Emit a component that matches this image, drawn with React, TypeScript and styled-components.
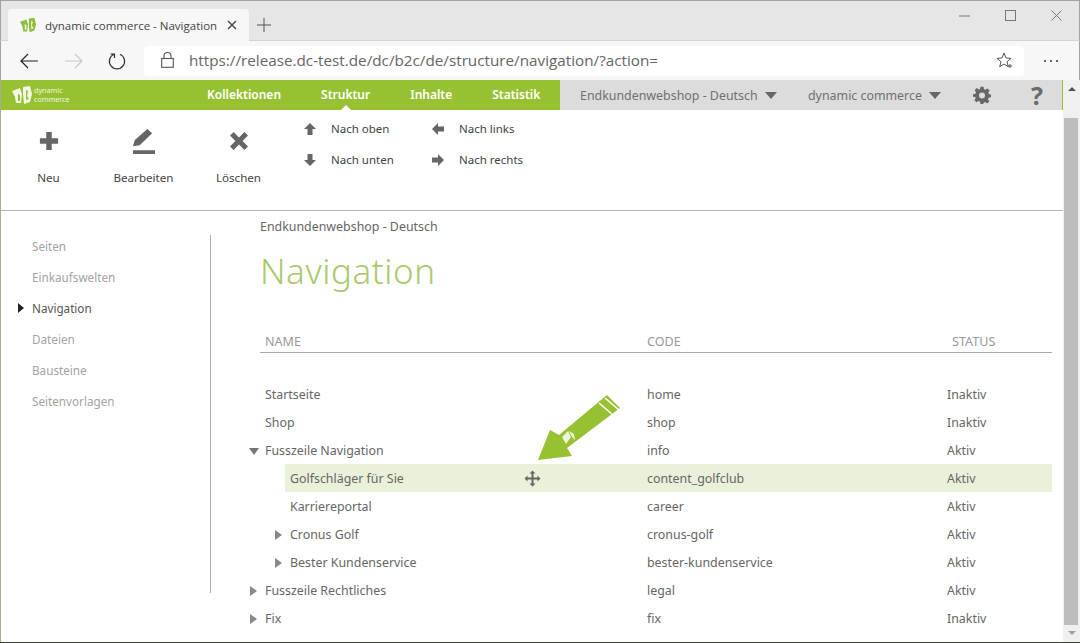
import React from "react";
import styled, { createGlobalStyle } from "styled-components";

const Global = createGlobalStyle`
  html, body { margin: 0; padding: 0; height: 100%; overflow: hidden; background: #fff; }
  #root { height: 643px; }
  * { box-sizing: border-box; }
`;

const Window = styled.div`
  width: 1080px; height: 643px; display: flex; flex-direction: column;
  font-family: "Noto Sans", "Open Sans", sans-serif; color: #666; overflow: hidden;
  border-bottom: 1px solid #3a3f36;
`;
const TabStrip = styled.div`
  height: 41px; flex: none; background: #e6e6e6; border-top: 1px solid #a3a3a3; border-left: 1px solid #a3a3a3; border-right: 1px solid #a3a3a3;
  border-bottom: 1px solid #d4d4d4; display: flex; padding: 8px 0 0 7px; align-items: flex-start;
`;
const Tab = styled.div`
  width: 241px; height: 32px; background: #f7f7f7; border-radius: 4px 4px 0 0; display: flex; align-items: center;
  padding: 0 12px 0 12px; font-family: "Open Sans", sans-serif; font-size: 11.5px; color: #444;
`;
const TabTitle = styled.span` margin-left: 9px; flex: 1; white-space: nowrap; `;
const NewTab = styled.div` margin: 9px 0 0 8px; width: 20px; height: 20px; display: flex; `;
const WindowControls = styled.div` margin-left: auto; display: flex; height: 12px; padding-right: 17px; gap: 35px; align-items: center; `;
const Toolbar = styled.div`
  height: 39px; flex: none; background: #f7f7f7; display: flex; align-items: center; border-left: 1px solid #a3a3a3; border-right: 1px solid #a3a3a3;
`;
const NavIcons = styled.div` display: flex; width: 143px; padding-left: 18px; gap: 24.5px; align-items: center; `;
const Address = styled.div`
  width: 880px; height: 30px; background: #fff; border-radius: 4px; display: flex; align-items: center; padding: 0 11px 1px 17px;
  font-family: "Open Sans", sans-serif; font-size: 15.25px; color: #666; white-space: nowrap;
`;
const Url = styled.span` margin-left: 15px; flex: 1; `;
const More = styled.div` margin-left: 19px; display: flex; align-items: center; `;
const Page = styled.div` flex: 1; display: flex; min-height: 0; border-left: 1px solid #a5b08d; `;
const Content = styled.div` flex: 1; display: flex; flex-direction: column; min-width: 0; position: relative; `;
const TopNav = styled.div`
  height: 30px; flex: none; display: flex; background: #97c133; position: relative;
`;
const Brand = styled.div`
  width: 206px; flex: none; display: flex; align-items: center; padding-left: 11px; gap: 2px; color: #fff;
`;
const BrandText = styled.div` font-size: 7.2px; line-height: 9px; color: #eef6da; font-weight: 400; `;
const Menu = styled.div` width: 353px; flex: none; display: flex; gap: 40px; `;
const MenuItem = styled.div<{ $active?: boolean }>`
  position: relative; color: #fff; font-weight: 600; font-size: 12px; line-height: 30px; white-space: nowrap;
  ${(p) => p.$active && `&::after { content: ""; position: absolute; left: 50%; bottom: 0; margin-left: -5px; border: 5px solid transparent; border-top: 0; border-bottom-color: #fff; }`}
`;
const Account = styled.div`
  flex: 1; background: #dcdcdc; display: flex; align-items: center; color: #6f6f6f; font-size: 12.4px; white-space: nowrap; padding-left: 20px;
  border-right: 1px solid #97c133;
`;
const AccountItem = styled.div<{ $w: number }>` width: ${(p) => p.$w}px; flex: none; display: flex; align-items: center; gap: 7px; `;
const Caret = styled.span`
  width: 0; height: 0; border-left: 6.5px solid transparent; border-right: 6.5px solid transparent; border-top: 7px solid #666; flex: none;
`;
const Help = styled.div` font-size: 25px; font-weight: 700; color: #6a6a6a; margin-left: 40px; line-height: 1; `;
const Actions = styled.div`
  height: 101px; flex: none; display: flex; border-bottom: 1px solid #b3b8ad; margin-left: 0;
`;
const BigAction = styled.div<{ $w: number }>`
  width: ${(p) => p.$w}px; flex: none; display: flex; flex-direction: column; align-items: center; padding-top: 15px;
  font-size: 11.6px; color: #444;
`;
const BigIcon = styled.div` height: 32px; display: flex; align-items: center; justify-content: center; margin-bottom: 13px; `;
const BigLabel = styled.div` line-height: 16px; `;
const BigGroup = styled.div` display: flex; width: 286px; `;
const SmallGrid = styled.div`
  display: grid; grid-template-columns: 128px 120px; grid-auto-rows: 31px; padding: 3px 0 0 16px; font-size: 11.5px; color: #444;
`;
const SmallAction = styled.div` display: flex; align-items: center; gap: 14px; height: 31px; `;
const Body = styled.div` flex: 1; display: flex; min-height: 0; position: relative; `;
const Side = styled.div`
  width: 210px; flex: none; margin-top: 24px; height: 358px; border-right: 1px solid #aeaeae; display: flex; flex-direction: column;
  padding-left: 31px; font-size: 11.7px;
`;
const SideItem = styled.div<{ $active?: boolean }>`
  height: 31px; line-height: 23px; color: ${(p) => (p.$active ? "#555" : "#a3a3a3")}; position: relative;
  ${(p) => p.$active && `&::before { content: ""; position: absolute; left: -14px; top: 6px; border: 5px solid transparent; border-left: 6px solid #222; border-right: 0; }`}
`;
const Main = styled.div` flex: 1; padding: 8px 11px 0 49px; min-width: 0; `;
const Crumb = styled.div` font-size: 12.4px; line-height: 16px; color: #666; `;
const Title = styled.h1`
  margin: 12px 0 0; font-family: "Noto Sans", sans-serif; font-weight: 300; font-size: 35px; line-height: 48px; color: #a9ca6c; letter-spacing: .55px;
`;
const HeadRow = styled.div`
  margin-top: 33px; height: 25px; padding-top: 5px; display: grid; grid-template-columns: 382px 305px 1fr; padding-left: 5px;
  border-bottom: 1px solid #aaa; font-size: 12.6px; color: #999; line-height: 17px;
`;
const Rows = styled.div` margin-top: 27px; display: flex; flex-direction: column; `;
const Row = styled.div<{ $depth: number; $selected?: boolean }>`
  height: 28px; display: grid; grid-template-columns: ${(p) => 382 - p.$depth * 25}px 300px 1fr; align-items: center; font-size: 12.4px; color: #666;
  margin-left: ${(p) => p.$depth * 25}px; padding-left: 5px; white-space: nowrap;
  background: ${(p) => (p.$selected ? "#e9f1da" : "transparent")};
`;
const NameCell = styled.div` position: relative; display: flex; justify-content: space-between; `;
const Tri = styled.span<{ $open?: boolean }>`
  position: absolute; top: ${(p) => (p.$open ? 6 : 4)}px; width: 0; height: 0;
  ${(p) => p.$open
    ? `left: -16px; border-left: 5px solid transparent; border-right: 5px solid transparent; border-top: 7px solid #777;`
    : `left: -15px; border-top: 5px solid transparent; border-bottom: 5px solid transparent; border-left: 7px solid #888;`}
`;
const MoveWrap = styled.span` margin-right: 106px; display: flex; align-items: center; `;
const Scroll = styled.div`
  width: 17px; flex: none; background: #f0f0f0; display: flex; flex-direction: column; align-items: center; justify-content: space-between; padding: 7px 0 7px; position: relative;
`;
const Thumb = styled.div` position: absolute; left: 1px; right: 2px; top: 38px; bottom: 17px; background: #bdbdbd; `;
const ScrollArrow = styled.span<{ $down?: boolean }>`
  width: 0; height: 0; border-left: 4px solid transparent; border-right: 4px solid transparent;
  ${(p) => (p.$down ? "border-top: 4px solid #a0a0a0;" : "border-bottom: 4px solid #505050;")}
`;
const Pointer = styled.svg` position: absolute; left: 537px; top: 315px; `;

const Logo = ({ size, color, inner }: { size: number; color: string; inner: string }) => (
  <svg width={size} height={size} viewBox="0 0 20 20">
    <path d="M0 6 L8 3 L10 9 L9 18 L4 18 L3 12 Z" fill={color} />
    <path d="M11 2 L18 1 L20 9 L18 17 L12 19 L11 10 Z" fill={color} />
    <path d="M6 9l2 1v6H6zM14 5l2 1-1 5 2 3-3 1z" fill={inner} />
  </svg>
);

const Gray = "#666";
const rows = [
  { d: 0, n: "Startseite", c: "home", s: "Inaktiv" },
  { d: 0, n: "Shop", c: "shop", s: "Inaktiv" },
  { d: 0, n: "Fusszeile Navigation", c: "info", s: "Aktiv", t: "open" },
  { d: 1, n: "Golfschläger für Sie", c: "content_golfclub", s: "Aktiv", sel: true },
  { d: 1, n: "Karriereportal", c: "career", s: "Aktiv" },
  { d: 1, n: "Cronus Golf", c: "cronus-golf", s: "Aktiv", t: "closed" },
  { d: 1, n: "Bester Kundenservice", c: "bester-kundenservice", s: "Aktiv", t: "closed" },
  { d: 0, n: "Fusszeile Rechtliches", c: "legal", s: "Aktiv", t: "closed" },
  { d: 0, n: "Fix", c: "fix", s: "Inaktiv", t: "closed" },
];

const Arrow = ({ r }: { r: number }) => (
  <svg width="14" height="14" viewBox="0 0 14 14" style={{ transform: `rotate(${r}deg)` }}>
    <path d="M7 1 L13 7 L9.5 7 L9.5 13 L4.5 13 L4.5 7 L1 7 Z" fill={Gray} />
  </svg>
);

export default function App() {
  return (
    <Window>
      <Global />
      <TabStrip>
        <Tab>
          <Logo size={16} color="#8fbf3a" inner="#f7f7f7" />
          <TabTitle>dynamic commerce - Navigation</TabTitle>
          <svg width="10" height="10" viewBox="0 0 10 10"><path d="M1 1l8 8M9 1l-8 8" stroke="#444" strokeWidth="1.4" /></svg>
        </Tab>
        <NewTab>
          <svg width="14" height="14" viewBox="0 0 14 14"><path d="M7 0v14M0 7h14" stroke="#555" strokeWidth="1" /></svg>
        </NewTab>
        <WindowControls>
          <svg width="11" height="11" viewBox="0 0 11 11"><path d="M0 6h11" stroke="#777" /></svg>
          <svg width="11" height="11" viewBox="0 0 11 11"><rect x=".5" y=".5" width="10" height="10" fill="none" stroke="#777" /></svg>
          <svg width="11" height="11" viewBox="0 0 11 11"><path d="M.5.5l10 10M10.500.5l-10 10" stroke="#777" /></svg>
        </WindowControls>
      </TabStrip>
      <Toolbar>
        <NavIcons>
          <svg width="20" height="18" viewBox="0 0 20 18"><path d="M19 9H2M9 2L2 9l7 7" fill="none" stroke="#222" strokeWidth="1.2" /></svg>
          <svg width="20" height="18" viewBox="0 0 20 18"><path d="M1 9h17M11 2l7 7-7 7" fill="none" stroke="#c8c8c8" strokeWidth="1.2" /></svg>
          <svg width="18" height="18" viewBox="0 0 18 18"><path d="M6 2.2A7.6 7.6 0 1 0 12 2.2M6.5 6V2H2.500" fill="none" stroke="#333" strokeWidth="1.2" /></svg>
        </NavIcons>
        <Address>
          <svg width="13" height="16" viewBox="0 0 13 16"><rect x=".7" y="6.5" width="11.6" height="8.8" fill="none" stroke="#555" strokeWidth="1.1" /><path d="M3 6.5V4a3.5 3.5 0 0 1 7 0v2.500" fill="none" stroke="#555" strokeWidth="1.1" /></svg>
          <Url>https://release.dc-test.de/dc/b2c/de/structure/navigation/?action=</Url>
          <svg width="17" height="17" viewBox="0 0 17 17"><path d="M8 1l2 5 5 .4-4 3.300 1.300 5L8 12l-4.300 2.700 1.300-5-4-3.300L6 6z" fill="none" stroke="#555" strokeWidth="1" /><path d="M14 12v4M12 14h4" stroke="#555" strokeWidth="1" /></svg>
        </Address>
        <More>
          <svg width="16" height="4" viewBox="0 0 16 4"><circle cx="2" cy="2" r="1" fill="#333" /><circle cx="8" cy="2" r="1" fill="#333" /><circle cx="14" cy="2" r="1" fill="#333" /></svg>
        </More>
      </Toolbar>
      <Page>
        <Content>
          <TopNav>
            <Brand>
              <Logo size={20} color="#f2f7e6" inner="#97c133" />
              <BrandText>dynamic<br />commerce</BrandText>
            </Brand>
            <Menu>
              <MenuItem>Kollektionen</MenuItem>
              <MenuItem $active>Struktur</MenuItem>
              <MenuItem>Inhalte</MenuItem>
              <MenuItem>Statistik</MenuItem>
            </Menu>
            <Account>
              <AccountItem $w={228}>Endkundenwebshop - Deutsch <Caret /></AccountItem>
              <AccountItem $w={165}>dynamic commerce <Caret /></AccountItem>
              <svg width="18" height="18" viewBox="0 0 24 24"><path fillRule="evenodd" fill="#666" d="M10 1h4l.7 3.200 1.900.8L19.400 3.200l2.800 2.800-1.800 2.800.8 1.900L24 11.500v3.500l-3.200.7-.8 1.900 1.800 2.800-2.800 2.800-2.800-1.800-1.900.8L13.500 24H10l-.7-3.200-1.900-.8-2.800 1.800-2.800-2.800 1.800-2.800-.8-1.900L0 14.500V11l3.200-.7.8-1.900L2.200 5.600 5 2.800l2.800 1.800 1.500-.6zM12 8.500a4 4 0 1 0 0 8 4 4 0 0 0 0-8z" /></svg>
              <Help>?</Help>
            </Account>
          </TopNav>
          <Actions>
            <BigGroup>
              <BigAction $w={95}>
                <BigIcon><svg width="20" height="20" viewBox="0 0 22 22"><path d="M8 1h6v7h7v6h-7v7H8v-7H1V8h7z" fill={Gray} /></svg></BigIcon>
                <BigLabel>Neu</BigLabel>
              </BigAction>
              <BigAction $w={95}>
                <BigIcon><svg width="23" height="27" viewBox="0 0 24 28"><path d="M16 1l5 4.500L8 18l-7 1 2-6.500zM1 23h23v4H1z" fill={Gray} /></svg></BigIcon>
                <BigLabel>Bearbeiten</BigLabel>
              </BigAction>
              <BigAction $w={95}>
                <BigIcon><svg width="18" height="18" viewBox="0 0 20 20"><path d="M4 0l6 6 6-6 4 4-6 6 6 6-4 4-6-6-6 6-4-4 6-6-6-6z" fill={Gray} /></svg></BigIcon>
                <BigLabel>Löschen</BigLabel>
              </BigAction>
            </BigGroup>
            <SmallGrid>
              <SmallAction><Arrow r={0} />Nach oben</SmallAction>
              <SmallAction><Arrow r={-90} />Nach links</SmallAction>
              <SmallAction><Arrow r={180} />Nach unten</SmallAction>
              <SmallAction><Arrow r={90} />Nach rechts</SmallAction>
            </SmallGrid>
          </Actions>
          <Body>
            <Side>
              <SideItem>Seiten</SideItem>
              <SideItem>Einkaufswelten</SideItem>
              <SideItem $active>Navigation</SideItem>
              <SideItem>Dateien</SideItem>
              <SideItem>Bausteine</SideItem>
              <SideItem>Seitenvorlagen</SideItem>
            </Side>
            <Main>
              <Crumb>Endkundenwebshop - Deutsch</Crumb>
              <Title>Navigation</Title>
              <HeadRow><span>NAME</span><span>CODE</span><span>STATUS</span></HeadRow>
              <Rows>
                {rows.map((r) => (
                  <Row key={r.n} $depth={r.d} $selected={r.sel}>
                    <NameCell>
                      {r.t && <Tri $open={r.t === "open"} />}
                      <span>{r.n}</span>
                      {r.sel && (
                        <MoveWrap>
                          <svg width="17" height="17" viewBox="0 0 17 17"><path d="M8.500 .5l3 3h-2v4h4v-2l3 3-3 3v-2h-4v4h2l-3 3-3-3h2v-4h-4v2l-3-3 3-3v2h4v-4h-2z" fill="#666" /></svg>
                        </MoveWrap>
                      )}
                    </NameCell>
                    <span>{r.c}</span>
                    <span>{r.s}</span>
                  </Row>
                ))}
              </Rows>
            </Main>
          </Body>
          <Pointer width="90" height="70" viewBox="0 0 90 70">
            <path d="M0 65 L12 35 L21 40 L69 0 L82 13 L29 53 L34 61 Z" fill="#97c133" />
            <path d="M67 3 L81 15M61 8 L75 20" stroke="#fff" strokeWidth="1.500" />
            <path d="M24 42 L30 36 L33 42 L28 49 ZM31 36 L36 39 L37 45 L34 42 Z" fill="#eef6da" />
          </Pointer>
        </Content>
        <Scroll>
          <ScrollArrow />
          <Thumb />
          <ScrollArrow $down />
        </Scroll>
      </Page>
    </Window>
  );
}
